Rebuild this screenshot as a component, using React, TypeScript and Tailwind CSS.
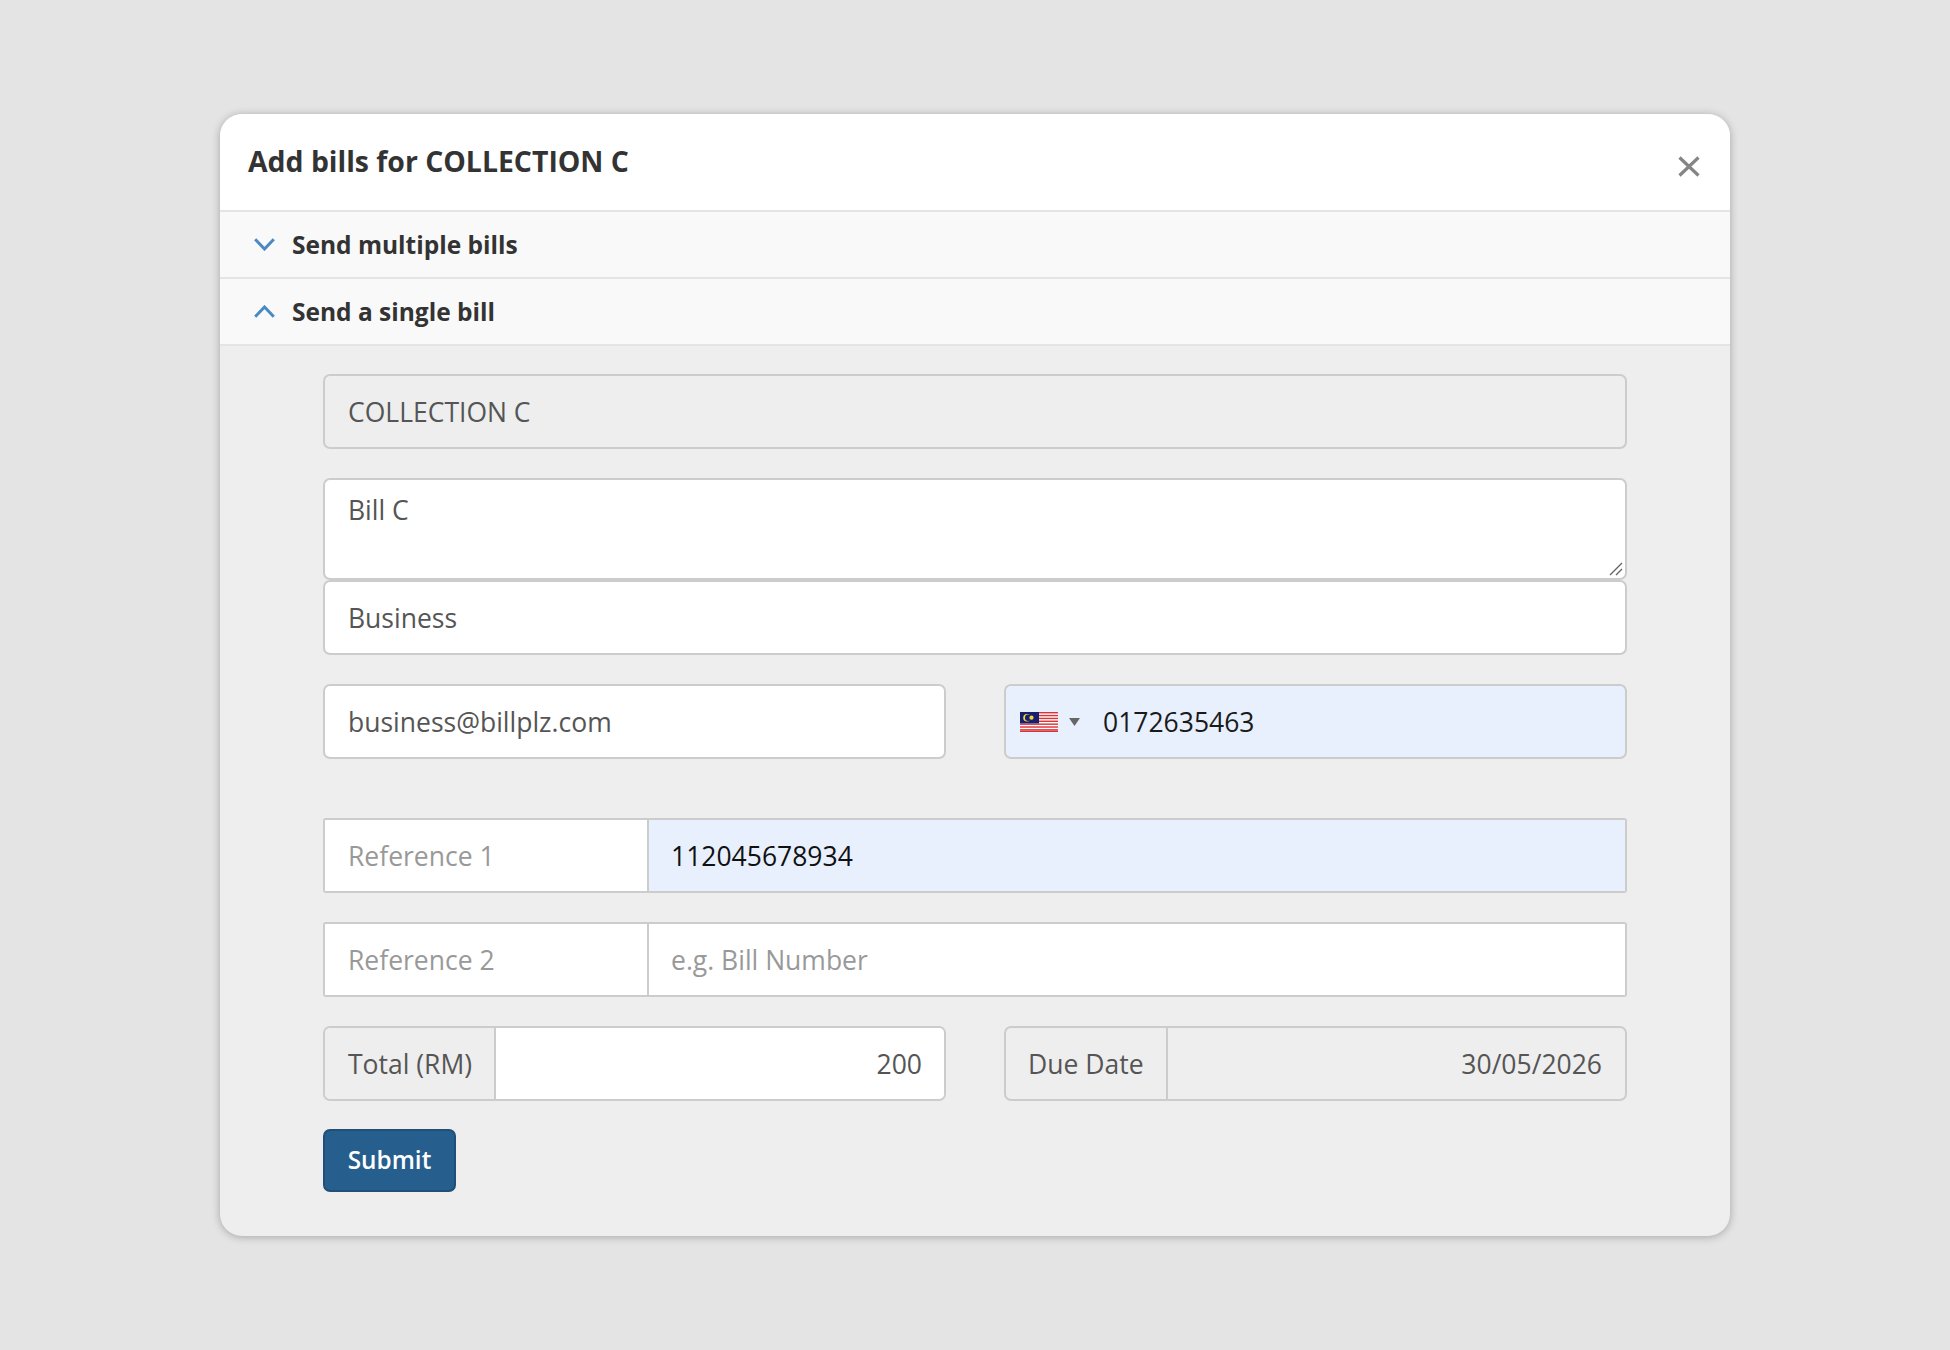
import React from 'react';

const inputBox = 'border-2 border-[#cccccc] rounded-[7px] h-[75px] flex items-center px-[23px] pt-[2px] text-[26.5px]';
const addonCell = 'flex items-center h-full px-[22px] pt-[2px] whitespace-nowrap';

const Chevron = ({ up }: { up?: boolean }) => (
    <svg width="21" height="13" viewBox="0 0 21 13" fill="none" className="ml-[34px] mr-[17px]">
        <path d={up ? 'M1.2 11.8 L10.5 2 L19.8 11.8' : 'M1.2 1.2 L10.5 11 L19.8 1.2'} stroke="#4a8ac4" strokeWidth="3" />
    </svg>
);

// malaysian flag, small version
const Flag = () => (
    <svg width="38" height="20" viewBox="0 0 38 20" className="shrink-0 -mt-[2px]">
        <rect width="38" height="20" fill="#fff" />
        {[0, 2.86, 5.72, 8.58, 11.44, 14.3, 17.16].map((y) => (
            <rect key={y} y={y} width="38" height="1.43" fill="#d9343a" />
        ))}
        <rect y="18.6" width="38" height="1.4" fill="#d9343a" />
        <rect width="19" height="11.4" fill="#17206e" />
        <circle cx="7" cy="5.7" r="3.8" fill="#f5d33f" />
        <circle cx="8.2" cy="5.7" r="3.2" fill="#17206e" />
        <circle cx="11.5" cy="5.7" r="2.1" fill="#f5d33f" />
    </svg>
);

const AccordionRow = ({ title, up }: { title: string; up?: boolean }) => (
    <div className="h-[67px] bg-[#f9f9f9] border-t-2 border-[#e4e4e4] flex items-center">
        <Chevron up={up} />
        <span className="text-[24.5px] font-bold text-[#333333] pt-[2px]">{title}</span>
    </div>
);

const App: React.FC = () => {
    return (
        <div className="w-[1950px] h-[1350px] bg-[#e4e4e4] pt-[114px] pl-[220px] font-['Open_Sans',sans-serif]">
            <div className="w-[1510px] h-[1122px] rounded-[22px] overflow-hidden bg-[#eeeeee] shadow-[0_1px_8px_rgba(0,0,0,0.28)]">
                <div className="h-[96px] bg-white flex items-start justify-between pl-[28px] pr-[30px]">
                    <h1 className="text-[28.4px] font-bold text-[#333333] leading-[38px] mt-[28px]">Add bills for COLLECTION C</h1>
                    <svg width="22" height="21" viewBox="0 0 22 21" fill="none" className="mt-[42px]">
                        <path d="M1.5 1.5 L20.5 19.5 M20.5 1.5 L1.5 19.5" stroke="#858585" strokeWidth="3.2" />
                    </svg>
                </div>
                <AccordionRow title="Send multiple bills" />
                <AccordionRow title="Send a single bill" up />
                <div className="border-t-2 border-[#e4e4e4] pt-[28px] px-[103px] flex flex-col">
                    <div className={inputBox + ' text-[#555555]'}>COLLECTION C</div>
                    <div className="relative mt-[29px] h-[102px] bg-white border-2 border-[#cccccc] rounded-[7px] px-[23px] pt-[12px] text-[26.5px] leading-[36px] text-[#555555]">
                        Bill C
                        <svg width="14" height="14" viewBox="0 0 14 14" fill="none" className="absolute right-[2px] bottom-[2px]">
                            <path d="M1 13 L13 1 M7 13 L13 7" stroke="#666666" strokeWidth="1.4" />
                        </svg>
                    </div>
                    <div className={inputBox + ' bg-white text-[#555555]'}>Business</div>
                    <div className="grid grid-cols-2 gap-x-[58px] mt-[29px]">
                        <div className={inputBox + ' bg-white text-[#555555]'}>business@billplz.com</div>
                        <div className={inputBox + ' bg-[#e8f0fe] text-[#1a1a1a] !pl-[14px]'}>
                            <Flag />
                            <svg width="11" height="8" viewBox="0 0 11 8" className="ml-[11px] mr-[23px] -mt-[2px]">
                                <path d="M0 0 H11 L5.5 8 Z" fill="#666666" />
                            </svg>
                            0172635463
                        </div>
                    </div>
                    <div className="mt-[59px] h-[75px] border-2 border-[#cccccc] rounded-[3px] flex text-[26.5px]">
                        <div className={addonCell + ' !pl-[23px] w-[324px] bg-white border-r-2 border-[#cccccc] text-[#999999]'}>Reference 1</div>
                        <div className={addonCell + ' flex-1 bg-[#e8f0fe] text-[#111111]'}>112045678934</div>
                    </div>
                    <div className="mt-[29px] h-[75px] border-2 border-[#cccccc] rounded-[3px] flex text-[26.5px] text-[#999999]">
                        <div className={addonCell + ' !pl-[23px] w-[324px] bg-white border-r-2 border-[#cccccc]'}>Reference 2</div>
                        <div className={addonCell + ' flex-1 bg-white'}>e.g. Bill Number</div>
                    </div>
                    <div className="grid grid-cols-2 gap-x-[58px] mt-[29px]">
                        <div className="h-[75px] border-2 border-[#cccccc] rounded-[7px] overflow-hidden flex text-[26.5px] text-[#555555]">
                            <div className={addonCell + ' !pl-[23px] w-[171px] bg-[#eeeeee] border-r-2 border-[#cccccc]'}>Total (RM)</div>
                            <div className={addonCell + ' flex-1 bg-white justify-end'}>200</div>
                        </div>
                        <div className="h-[75px] border-2 border-[#cccccc] rounded-[7px] overflow-hidden flex text-[26.5px] text-[#555555] bg-[#eeeeee]">
                            <div className={addonCell + ' w-[162px] border-r-2 border-[#cccccc]'}>Due Date</div>
                            <div className={addonCell + ' !pr-[23px] flex-1 justify-end'}>30/05/2026</div>
                        </div>
                    </div>
                    <button className="mt-[28px] w-[133px] h-[63px] rounded-[7px] bg-[#265f8e] border-2 border-[#214f76] text-white text-[24.3px] font-semibold">Submit</button>
                </div>
            </div>
        </div>
    );
};

export default App;
